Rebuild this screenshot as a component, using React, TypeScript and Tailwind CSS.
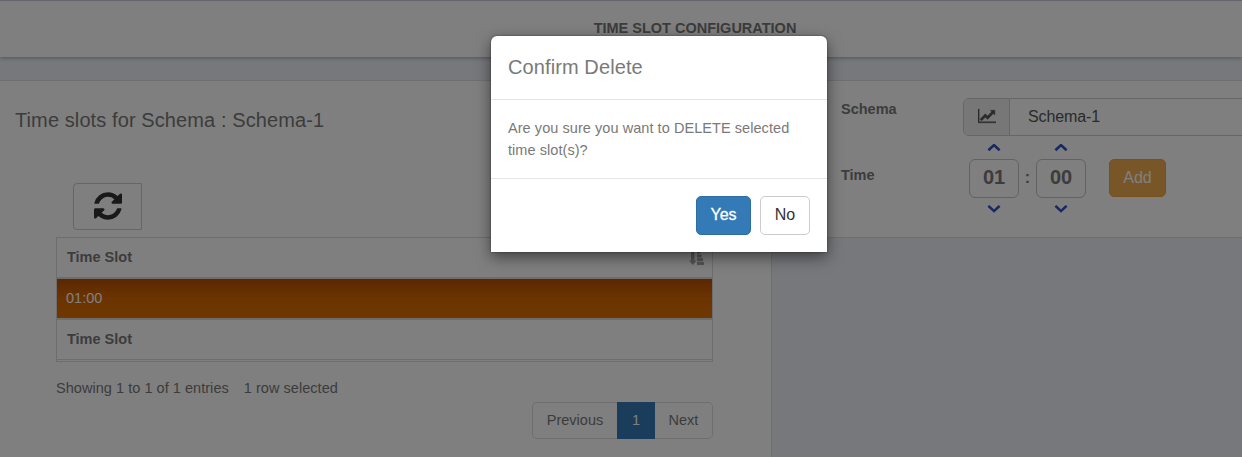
import React from "react";

const REFRESH =
  "M1511 1056q0 5-1 7-64 268-268 434.500t-478 166.500q-146 0-282.500-55t-243.500-157l-129 129q-19 19-45 19t-45-19-19-45v-448q0-26 19-45t45-19h448q26 0 45 19t19 45-19 45l-137 137q71 66 161 102t187 36q134 0 250-65t186-179q11-17 53-117 8-23 30-23h192q13 0 22.500 9.500t9.500 22.500zM1536 256v448q0 26-19 45t-45 19h-448q-26 0-45-19t-19-45 19-45l138-138q-148-137-349-137-134 0-250 65t-186 179q-11 17-53 117-8 23-30 23h-199q-13 0-22.500-9.500t-9.500-22.500v-7q65-268 270-434.500t480-166.500q146 0 284 55.500t245 156.500l130-129q19-19 45-19t45 19 19 45z";
const LINE_CHART =
  "M2048 1536v128h-2048v-1536h128v1408h1920zM1920 288v435q0 21-19.500 29.500t-35.500-7.500l-121-121-633 633q-10 10-23 10t-23-10l-233-233-416 416-192-192 585-585q10-10 23-10t23 10l233 233 464-464-121-121q-16-16-7.500-35.500t29.500-19.500h435q14 0 23 9t9 23z";

function Chevron({ down = false }: { down?: boolean }) {
  return (
    <svg viewBox="0 0 14 8" className="h-2 w-3.5" fill="none" stroke="#3050c8" strokeWidth="2.6">
      <path d={down ? "M1.4 0.9 L7 6.100 L12.6 0.9" : "M1.4 6.300 L7 1.1 L12.6 6.300"} />
    </svg>
  );
}

function TimeField({ value }: { value: string }) {
  return (
    <div className="flex w-[50px] flex-col items-center">
      <Chevron />
      <div className="mt-[7px] mb-[7px] flex h-[39px] w-full items-center justify-center rounded-md border border-[#c4c4c4] pb-[3px] text-[20px] font-bold">
        {value}
      </div>
      <Chevron down />
    </div>
  );
}

function SortIcon() {
  return (
    <svg viewBox="0 0 15 14" className="h-3.5 w-[15px]" fill="#a8a8a8">
      <path d="M2 0h3.500v9.500H7.500L3.750 14 0 9.500h2zM8 0h3.500v2.500H8zM8 3.500h4.500v3H8zM8 7.300h6v3H8zM8 11h7v3H8z" />
    </svg>
  );
}

function SlotsPanel() {
  return (
    <section className="h-[377px] w-[772px] shrink-0 border-t border-r border-[#dedede] bg-white">
      <h2 className="mt-[25px] ml-[15px] text-[20px] leading-7 tracking-[0.1px]">Time slots for Schema : Schema-1</h2>
      <button className="mt-[49px] ml-[73px] flex h-[47px] w-[69px] items-center justify-center rounded-l-[4px] border border-[#ccc]">
        <svg viewBox="0 0 1536 1792" className="mb-0.5 h-8 w-7" preserveAspectRatio="none" fill="#333">
          <path d={REFRESH} />
        </svg>
      </button>
      <div className="mt-[7px] ml-[56px] w-[657px] border border-[#dadada] text-[14.5px]">
        <div className="flex h-[41px] items-center justify-between border-b-2 border-[#dadada] pr-2 pl-2.5 font-bold">
          <span>Time Slot</span>
          <SortIcon />
        </div>
        <div className="flex h-[39px] items-center bg-linear-to-b from-[#b85000] via-[#d66800] to-[#e07000] pl-[9px] text-[14.500px] text-white">
          01:00
        </div>
        <div className="flex h-[42px] items-center border-t-2 border-b border-[#dadada] pl-2.5 font-bold">
          Time Slot
        </div>
        <div className="h-px" />
      </div>
      <div className="mt-[15px] ml-[56px] flex gap-[15px] text-[14.500px] leading-[22px] tracking-[0.040px]">
        <span>Showing 1 to 1 of 1 entries</span>
        <span>1 row selected</span>
      </div>
      <nav className="mt-[3px] ml-[532px] flex h-[37px] w-[181px] text-[14.500px]">
        <a className="flex w-[85px] items-center justify-center rounded-l-[5px] border border-r-0 border-[#ddd]">Previous</a>
        <a className="flex w-[38px] items-center justify-center bg-[#337ab7] text-white">1</a>
        <a className="flex w-[58px] items-center justify-center rounded-r-[5px] border border-l-0 border-[#ddd]">Next</a>
      </nav>
    </section>
  );
}

function SchemaPanel() {
  return (
    <section className="h-[158px] flex-1 border-t border-b border-[#dedede] bg-white pl-[69px] font-bold">
      <div className="mt-[17px] flex h-[38px]">
        <label className="w-[122px] text-[14.500px] leading-[22px]">Schema</label>
        <div className="flex w-[300px] shrink-0 rounded-l-[6px] border border-[#ccc] text-[16px] font-normal text-[#555]">
          <span className="flex w-[46px] items-center justify-center rounded-l-[5px] border-r border-[#ccc] bg-[#eee]">
            <svg viewBox="0 0 2048 1792" className="mb-0.5 h-4 w-[18px]" preserveAspectRatio="none" fill="#555" stroke="#555" strokeWidth="50">
              <path d={LINE_CHART} />
            </svg>
          </span>
          <span className="flex items-center pl-[18px] tracking-[-0.1px]">Schema-1</span>
        </div>
      </div>
      <div className="mt-2 flex">
        <label className="w-[128px] pt-5 text-[14.500px] leading-[22px]">Time</label>
        <TimeField value="01" />
        <span className="w-[17px] pt-[22px] text-center text-[16px]">:</span>
        <TimeField value="00" />
        <button className="mt-[15px] ml-[23px] h-[38px] w-[57px] rounded-[5px] border border-[#eea236] bg-[#f0ad4e] text-[16px] font-normal text-white">
          Add
        </button>
      </div>
    </section>
  );
}

function ConfirmDialog() {
  return (
    <div
      role="dialog"
      className="mt-9 ml-[491px] h-[216px] w-[336px] rounded-t-[6px] bg-white shadow-[0_5px_15px_rgba(0,0,0,0.5),0_0_2px_rgba(0,0,0,0.5)]"
    >
      <h3 className="h-16 border-b border-[#e5e5e5] pt-[17px] pl-[17px] text-[20px] leading-7 tracking-[0.1px]">Confirm Delete</h3>
      <p className="h-[79px] border-b border-[#e5e5e5] pt-[17px] pl-[17px] text-[14.500px] leading-[22px] tracking-[0.060px]">
        Are you sure you want to DELETE selected
        <br />
        time slot(s)?
      </p>
      <div className="flex justify-end gap-[9px] pt-[17px] pr-[17px] text-[16px]">
        <button className="h-[39px] w-[55px] rounded-[5px] border border-[#2e6da4] bg-[#337ab7] pb-0.5 text-white [-webkit-text-stroke:0.3px_white]">
          Yes
        </button>
        <button className="h-[39px] w-[50px] rounded-[5px] border border-[#ccc] pb-0.5 text-[#333]">No</button>
      </div>
    </div>
  );
}

export default function App() {
  return (
    <div className="relative h-[457px] w-full overflow-hidden bg-[#eef0f7] font-['Liberation_Sans',Arial,sans-serif] text-[#797979]">
      <header className="flex h-[57px] justify-center border-t border-[#cacbdb] bg-white pt-4 pl-[148px] text-[14.500px] leading-[22px] font-bold shadow-[0_1px_4px_rgba(0,0,0,0.3)]">
        TIME SLOT CONFIGURATION
      </header>
      <main className="mt-[23px] flex items-start">
        <SlotsPanel />
        <SchemaPanel />
      </main>
      <div className="absolute inset-0 flex items-start bg-black/50">
        <ConfirmDialog />
      </div>
    </div>
  );
}
